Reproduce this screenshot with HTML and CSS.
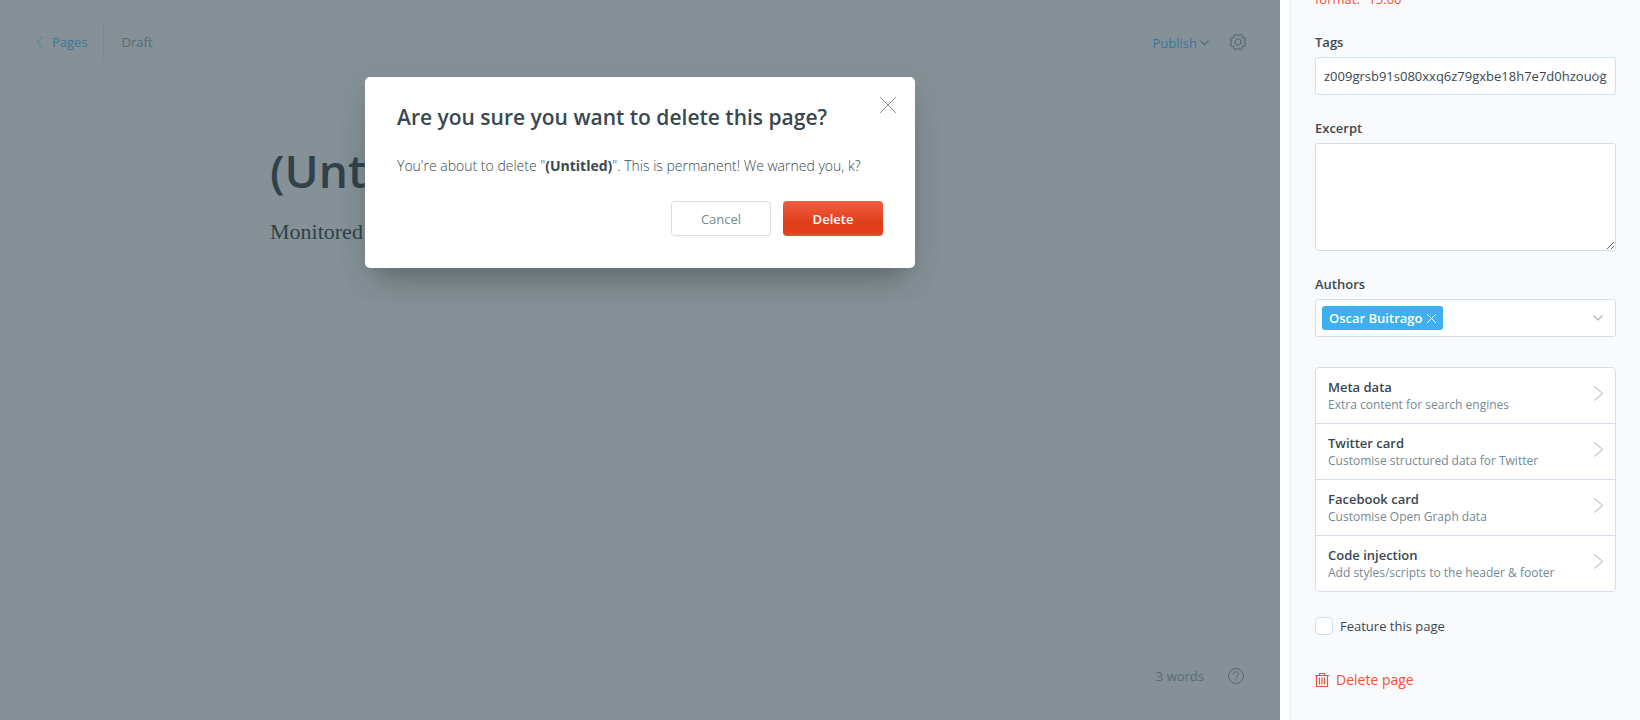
FILE: index.html
```html
<!DOCTYPE html>
<html lang="en">
<head>
<meta charset="utf-8">
<title>Delete page</title>
<link rel="stylesheet" href="styles.css">
</head>
<body>
<div class="app">
  <main class="editor">
    <header class="editor-header">
      <nav class="crumbs">
        <a class="back" href="#">
          <svg width="8" height="12" viewBox="0 0 8 12"><path d="M7 .5 1 6l6 5.500" fill="none" stroke="currentColor"/></svg>
          Pages
        </a>
        <span class="status">Draft</span>
      </nav>
      <div class="actions">
        <button class="publish" type="button">Publish
          <svg width="9" height="6" viewBox="0 0 9 6"><path d="M.5.7l4 4 4-4" fill="none" stroke="currentColor" stroke-width="1.200"/></svg>
        </button>
        <button class="icon-button" type="button" aria-label="Settings">
          <svg width="18" height="18" viewBox="0 0 18 18" fill="none" stroke="currentColor" stroke-width="1.200"><circle cx="9" cy="9" r="3"/><path d="M7.200 1.300Q9 4.200 10.800 1.300L13.200 2.300Q12.500 5.500 15.700 4.800L16.700 7.200Q13.800 9 16.700 10.800L15.700 13.200Q12.500 12.500 13.200 15.700L10.800 16.700Q9 13.800 7.200 16.700L4.800 15.700Q5.500 12.500 2.300 13.200L1.300 10.800Q4.200 9 1.300 7.200L2.300 4.800Q5.500 5.500 4.800 2.300Z" stroke-linejoin="round"/></svg>
        </button>
      </div>
    </header>
    <article class="post">
      <h1 class="post-title">(Untitled)</h1>
      <p class="post-body">Monitored</p>
    </article>
    <footer class="editor-footer">
      <span>3 words</span>
      <a class="help" href="#" aria-label="Help">
        <svg width="16" height="16" viewBox="0 0 16 16" fill="none" stroke="currentColor"><circle cx="8" cy="8" r="7.500"/><path d="M5.500 6.300C5.500 3 10.600 3 10.600 6c0 1.900-2.500 1.800-2.500 4M8.100 11.300v1.200"/></svg>
      </a>
    </footer>
    <section class="modal" role="dialog" aria-labelledby="modal-title">
      <button class="close" type="button" aria-label="Close">
        <svg width="16" height="16" viewBox="0 0 16 16"><path d="M0 0l16 16M16 0L0 16" stroke="currentColor"/></svg>
      </button>
      <h2 class="modal-title" id="modal-title">Are you sure you want to delete this page?</h2>
      <p class="modal-text">You're about to delete "<strong>(Untitled)</strong>". This is permanent! We warned you, k?</p>
      <div class="modal-actions">
        <button class="button" type="button">Cancel</button>
        <button class="button button-danger" type="button">Delete</button>
      </div>
    </section>
  </main>
  <aside class="settings">
    <p class="error">Must be in format: "15:00"</p>
    <div class="field">
      <label for="tags">Tags</label>
      <div class="control">
        <input id="tags" class="box" type="text" value="z009grsb91s080xxq6z79gxbe18h7e7d0hzouog">
        <svg class="caret" width="10" height="6" viewBox="0 0 10 6"><path d="M.5.5 5 5 9.500.5" fill="none" stroke="currentColor" stroke-width="1.200"/></svg>
      </div>
    </div>
    <div class="field">
      <label for="excerpt">Excerpt</label>
      <textarea id="excerpt" class="box"></textarea>
    </div>
    <div class="field">
      <label id="authors-label">Authors</label>
      <div class="control box authors" role="group" aria-labelledby="authors-label">
        <span class="token">Oscar Buitrago
          <button type="button" aria-label="Remove Oscar Buitrago"><svg width="9" height="9" viewBox="0 0 9 9"><path d="M0 0l9 9M9 0L0 9" stroke="currentColor"/></svg></button>
        </span>
        <svg class="caret" width="10" height="6" viewBox="0 0 10 6"><path d="M.5.5 5 5 9.500.5" fill="none" stroke="currentColor" stroke-width="1.200"/></svg>
      </div>
    </div>
    <div class="menu">
      <button class="menu-item" type="button"><span><b>Meta data</b><small>Extra content for search engines</small></span><svg width="9" height="15" viewBox="0 0 9 15"><path d="M.5.5l8 7-8 7" fill="none" stroke="currentColor"/></svg></button>
      <button class="menu-item" type="button"><span><b>Twitter card</b><small>Customise structured data for Twitter</small></span><svg width="9" height="15" viewBox="0 0 9 15"><path d="M.5.5l8 7-8 7" fill="none" stroke="currentColor"/></svg></button>
      <button class="menu-item" type="button"><span><b>Facebook card</b><small>Customise Open Graph data</small></span><svg width="9" height="15" viewBox="0 0 9 15"><path d="M.5.5l8 7-8 7" fill="none" stroke="currentColor"/></svg></button>
      <button class="menu-item" type="button"><span><b>Code injection</b><small>Add styles/scripts to the header &amp; footer</small></span><svg width="9" height="15" viewBox="0 0 9 15"><path d="M.5.5l8 7-8 7" fill="none" stroke="currentColor"/></svg></button>
    </div>
    <label class="feature"><input type="checkbox">Feature this page</label>
    <button class="delete-page" type="button">
      <svg width="14" height="14" viewBox="0 0 14 14" fill="none" stroke="currentColor"><path d="M0 2.500h14M4.500 2V.5h5V2M1.500 3v10.500h11V3M4.500 4.500v7M7 4.500v7M9.500 4.500v7" stroke-width="1.200"/></svg>
      Delete page
    </button>
  </aside>
</div>
</body>
</html>
```
FILE: styles.css
```css
* { box-sizing: border-box; }
body {
  margin: 0;
  font: 13px/20px "Open Sans", "Noto Sans", sans-serif;
  color: #394850;
}
h1, h2, p { margin: 0; }
a { color: inherit; text-decoration: none; }
button, input, textarea { font: inherit; color: inherit; }
button { padding: 0; border: 0; background: none; cursor: pointer; }
svg { display: block; flex: none; }

.app {
  display: grid;
  grid-template-columns: minmax(0, 1fr) 350px;
  column-gap: 10px;
  height: 100vh;
  overflow: hidden;
}

/* Editor, dimmed behind the dialog */
.editor {
  position: relative;
  display: flex;
  flex-direction: column;
  background: #859197;
  color: #586c75;
}
.editor-header {
  display: flex;
  justify-content: space-between;
  align-items: center;
  padding: 24px 33px 0 36px;
}
.crumbs, .actions, .back, .publish { display: flex; align-items: center; }
.back {
  gap: 8px;
  height: 36px;
  padding-right: 15px;
  border-right: 1px solid #788a94;
  color: #3b769b;
}
.back svg { color: #4b7f9a; }
.status { padding-left: 18px; }
.actions { gap: 20px; }
.publish { gap: 3px; padding-top: 2px; color: #3b769b; }
.publish svg { color: #4d6a7a; }
.post {
  flex: 1;
  width: 100%;
  max-width: 740px;
  margin: 0 auto;
  padding-top: 78px;
  color: #304149;
}
.post-title { font-size: 46px; line-height: 64px; font-weight: 600; }
.post-body {
  padding-top: 14px;
  font: 22px/32px "Liberation Serif", serif;
}
.editor-footer {
  display: flex;
  justify-content: flex-end;
  align-items: center;
  gap: 24px;
  padding: 0 36px 34px;
}

/* Dialog */
.modal {
  position: absolute;
  top: 77px;
  left: 50%;
  width: 550px;
  transform: translateX(-50%);
  padding: 22px 32px 32px;
  border-radius: 5px;
  background: #fff;
  color: #394850;
  box-shadow: 0 20px 30px -14px rgba(40, 50, 45, .4), 0 8px 30px rgba(50, 60, 70, .15);
}
.close { position: absolute; top: 20px; right: 19px; color: #8b9296; }
.modal-title { font-size: 21px; line-height: 36px; font-weight: 600; }
.modal-text { padding: 21px 0 25px; font-size: 14px; font-weight: 300; }
.modal-text strong { font-weight: 700; }
.modal-actions { display: flex; justify-content: flex-end; gap: 12px; }
.button {
  width: 100px;
  height: 35px;
  border: 1px solid #d3e0e6;
  border-radius: 4px;
  background: #fff;
  color: #738a94;
  box-shadow: 0 1px 1px rgba(0, 0, 0, .04);
}
.button-danger {
  border: 0;
  background: linear-gradient(#f05e42, #e03f1c 60%, #e03f1c 90%, #ea5232);
  color: #fff;
  font-weight: 600;
}

/* Settings panel */
.settings {
  padding: 0 24px;
  border-left: 1px solid #e2edf5;
  background: #f9fafc;
}
.error { width: 100px; margin-top: -31px; color: #f05230; }
.field { padding-top: 23px; }
.field > label { display: block; padding-bottom: 5px; font-weight: 600; }
.box {
  display: block;
  width: 100%;
  border: 1px solid #d3e0ea;
  border-radius: 3px;
  background: #fff;
}
.control { position: relative; }
input.box { height: 38px; padding: 0 6px 0 8px; }
textarea.box { height: 108px; resize: vertical; }
.caret { position: absolute; top: 15px; right: 12px; color: #9fb3c3; }
.authors { height: 38px; padding: 6px; }
.token {
  display: inline-flex;
  align-items: center;
  gap: 5px;
  height: 24px;
  padding: 0 7px;
  border-radius: 3px;
  background: #3eb0ef;
  color: #fff;
  font-weight: 600;
}
.menu {
  margin-top: 30px;
  border: 1px solid #d3e0ea;
  border-radius: 4px;
  background: #fff;
}
.menu-item {
  display: flex;
  justify-content: space-between;
  width: 100%;
  padding: 10px 12px 9px;
  text-align: left;
}
.menu-item + .menu-item { border-top: 1px solid #d3e0ea; }
.menu-item b, .menu-item small { display: block; line-height: 18px; }
.menu-item b { font-weight: 600; }
.menu-item small { font-size: 12px; color: #738a94; }
.menu-item svg { margin-top: 8px; color: #9baeb8; }
.feature { display: flex; align-items: center; gap: 7px; margin-top: 24px; }
.feature input {
  appearance: none;
  width: 18px;
  height: 18px;
  margin: 0;
  border: 1px solid #d3e0ea;
  border-radius: 4px;
  background: #fff;
}
.delete-page {
  display: flex;
  align-items: center;
  gap: 7px;
  margin-top: 34px;
  color: #f05230;
  font-size: 14px;
}
```
